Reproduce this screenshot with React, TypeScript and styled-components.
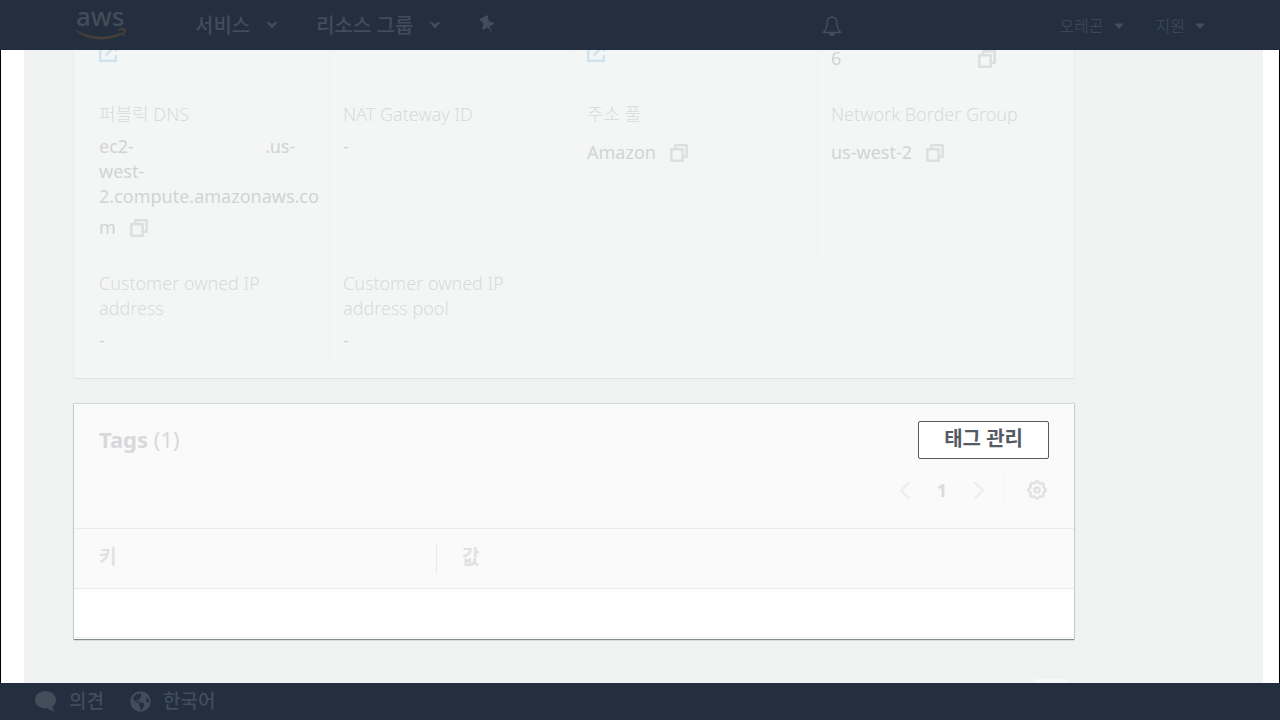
import React from "react";
import styled, { createGlobalStyle, css } from "styled-components";
import { FaGlobeAmericas } from "react-icons/fa";

const GlobalStyle = createGlobalStyle`
  *, *::before, *::after { box-sizing: border-box; }
  body { margin: 0; background: #fff; }
  body, button, table {
    font-family: "Noto Sans", "Noto Sans CJK KR", sans-serif;
    font-size: 18px;
    line-height: 25px;
  }
  button { border: 0; padding: 0; background: none; color: inherit; cursor: pointer; }
  h2, p, dl, dd, dt { margin: 0; font-weight: 400; }
`;

const Page = styled.div`
  height: 100vh;
  display: flex;
  flex-direction: column;
`;

const TopBar = styled.header`
  flex: none;
  height: 50px;
  padding: 0 75px;
  display: flex;
  align-items: center;
  background: #232f3e;
  color: #414d59;
`;

const LogoLink = styled.a`
  display: flex;
  margin-right: 68px;
`;

const NavButton = styled.button<{ $small?: boolean }>`
  display: flex;
  align-items: center;
  white-space: nowrap;
  ${(p) =>
    p.$small
      ? css`
          gap: 10px;
          font-size: 16px;
          font-weight: 300;
          padding-top: 2px;
        `
      : css`
          gap: 16px;
          font-size: 20px;
          font-weight: 500;
        `}
`;

const MainNav = styled.nav`
  display: flex;
  align-items: center;
  gap: 38px;
`;

const SideNav = styled.nav`
  margin-left: auto;
  display: flex;
  align-items: center;
  gap: 32px;
`;

const IconButton = styled.button`
  display: inline-flex;
  align-items: center;
  justify-content: center;
`;

const BellButton = styled(IconButton)`
  margin-right: 185px;
  padding-top: 2px;
`;

const Main = styled.main`
  flex: 1;
  min-height: 0;
  overflow: hidden;
  padding: 0 16px 0 23px;
  border: solid #000;
  border-width: 0 1px;
  display: flex;
`;

const Content = styled.div`
  flex: 1;
  min-width: 0;
  display: flex;
  flex-direction: column;
  justify-content: flex-end;
  padding: 0 189px 0 50px;
  background: #f1f3f3;
`;

const DetailCard = styled.section`
  flex: none;
  padding: 0 12px;
  background: #f4f6f5;
  box-shadow: 0 1px 1px #e2e5e5, 0 0 1px 1px #ebeded;
`;

const DetailGrid = styled.dl`
  display: grid;
  grid-template-columns: repeat(4, minmax(0, 1fr));
  padding-bottom: 12px;
`;

const Detail = styled.div<{ $last?: boolean }>`
  padding: 12px 4px 13px 13px;
  border-right: ${(p) => (p.$last ? "0" : "1px solid #f0f2f2")};
`;

const Label = styled.dt`
  margin-bottom: 7px;
  color: #d8dbdb;
  font-weight: 300;
`;

const Value = styled.dd`
  color: #d1d4d4;
  overflow-wrap: anywhere;
`;

const CopyLine = styled.span`
  display: flex;
  align-items: center;
  height: 37px;
  gap: 14px;
`;

const Hidden = styled.span`
  display: inline-block;
  width: 131px;
`;

const HiddenDigits = styled.span`
  width: 109px;
`;

const OpenLink = styled.a`
  display: flex;
  height: 25px;
  align-items: center;
  color: #cfe2ef;
`;

const TagsCard = styled.section`
  flex: none;
  margin-top: 26px;
  background: #fafafa;
  box-shadow: 0 1px 1px #7f888b, 0 0 1px 1px #d5dada;
`;

const TagsHeader = styled.div`
  display: flex;
  flex-direction: column;
  align-items: flex-end;
  gap: 12px;
  padding: 17px 25px 19px;
`;

const TitleRow = styled.div`
  align-self: stretch;
  display: flex;
  justify-content: space-between;
`;

const Title = styled.h2`
  color: #d7d9da;
  font-size: 22px;
  line-height: 36px;

  b { font-weight: 700; }
  span { font-weight: 400; }
`;

const ManageButton = styled.button`
  height: 38px;
  padding: 0 25px 3px;
  border: 1px solid #545b64;
  border-radius: 2px;
  background: #fff;
  color: #545b64;
  font-size: 20px;
  font-weight: 700;
`;

const Pager = styled.div`
  display: flex;
  align-items: center;
  height: 38px;
  padding-right: 2px;
  color: #eceeee;
`;

const PageNumber = styled.button`
  width: 62px;
  color: #dadcdc;
  font-weight: 700;
`;

const PagerRule = styled.span`
  height: 38px;
  margin: 0 22px 0 19px;
  border-left: 1px solid #f5f6f6;
`;

const TagTable = styled.table`
  width: 100%;
  border-spacing: 0;
  table-layout: fixed;
`;

const HeadCell = styled.th<{ $first?: boolean }>`
  width: ${(p) => (p.$first ? "363px" : "auto")};
  height: 61px;
  padding: 0;
  border: solid #e9ebeb;
  border-width: 1px 0;
  text-align: left;
  color: #e0e2e2;
  font-size: 19px;

  span {
    display: block;
    padding: 0 0 3px 25px;
    line-height: 27px;
    border-right: ${(p) => (p.$first ? "1px solid #e9ebeb" : "0")};
  }
`;

const BodyCell = styled.td`
  height: 49px;
  padding: 0;
  background: #fff;
  border-bottom: 1px solid #eceeee;
`;

const CardEdge = styled.div`
  height: 1px;
  background: #fff;
`;

const BelowCard = styled.div`
  flex: none;
  height: 44px;
  display: flex;
  align-items: flex-end;
  justify-content: flex-end;
  padding-right: 8px;
`;

const NextPanelTab = styled.div`
  width: 32px;
  height: 4px;
  background: #f6f7f7;
`;

const BottomBar = styled.footer`
  flex: none;
  height: 37px;
  padding: 0 35px 1px;
  display: flex;
  align-items: center;
  gap: 26px;
  background: #232f3e;
  color: #414d59;
`;

const FooterButton = styled.button`
  display: flex;
  align-items: center;
  gap: 12px;
  font-size: 19px;
  font-weight: 500;
`;

const Logo = () => (
  <svg width="52" height="40" viewBox="0 0 52 40" overflow="visible" role="img" aria-label="aws">
    <text x="1" y="21" fontFamily="Noto Sans, sans-serif" fontSize="26" fontWeight="500" fill="#414d59">
      aws
    </text>
    <path d="M.5 24.500C15 33 32 34 46.500 27.500c1.600-.7 2.700.6 1.400 1.500C34 37 13 36.500 .3 25.200c-.5-.5-.2-1 .2-.7z" fill="#463f3a" />
    <path d="M42.500 24.600c2.600-1.700 7.500-1.600 8.200-.7.700 1-.4 5.500-2.800 7.900-.4.4-.8.200-.6-.3.700-1.700 1.800-5.100 1.300-5.800s-4-.4-5.700-.3c-.6.100-.8-.4-.4-.8z" fill="#463f3a" />
  </svg>
);

const Chevron = () => (
  <svg width="12" height="8" viewBox="0 0 12 8" aria-hidden="true">
    <path d="M.3 1.200c2-.8 3.700.3 5.700 2 2-1.700 3.700-2.800 5.700-2L6 7.500z" fill="currentColor" />
  </svg>
);

const Caret = () => (
  <svg width="10" height="6" viewBox="0 0 10 6" aria-hidden="true">
    <path d="M0 .5h10L5 6z" fill="currentColor" />
  </svg>
);

const Bell = () => (
  <svg width="20" height="22" viewBox="0 0 20 22" fill="none" stroke="currentColor" strokeWidth="1.400" aria-hidden="true">
    <path d="M10 .5v2M10 2.300c-3.300 0-5 2.400-5 5.500 0 5.200-1 7-3.800 9.700h17.600C16 14.800 15 13 15 7.800c0-3.100-1.700-5.500-5-5.500z" strokeLinejoin="round" />
    <path d="M7 18h6c-.3 2-1.400 3-3 3s-2.700-1-3-3z" fill="currentColor" stroke="none" />
  </svg>
);

const Pin = () => (
  <svg width="18" height="18" viewBox="0 0 18 18" overflow="visible" fill="currentColor" aria-hidden="true">
    <path
      transform="rotate(-28 9 9)"
      d="M4.600 0h8c.9 0 .9 2 0 2.100h-.5v4.800c2.200.9 3 2.300 3 4.100H9.600L8.700 18.500 7.700 11H2.100c0-1.800.8-3.200 3-4.100V2.100h-.5c-.9-.1-.9-2.100 0-2.100z"
    />
  </svg>
);

const Bubble = () => (
  <svg width="22" height="21" viewBox="0 0 22 21" fill="currentColor" aria-hidden="true">
    <path d="M10.500 0C16.500 0 21 3.800 21 8.700c0 2.700-1.400 5-3.600 6.700.2 1.900 1 3.300 2.600 4.900-3-.1-5.400-1.300-7.200-3.100-.7.100-1.500.2-2.300.2C4.600 17.400 0 13.600 0 8.700S4.600 0 10.500 0z" />
  </svg>
);

const CopyIcon = () => (
  <svg width="18" height="18" viewBox="0 0 18 18" fill="none" stroke="#dde0e0" strokeWidth="2.600" strokeLinejoin="round" aria-hidden="true">
    <path d="M1.300 5.300h11.400v11.400H1.300z" />
    <path d="M5.300 4.500V1.300h11.400v11.400H13.500" />
  </svg>
);

const OpenIcon = () => (
  <svg width="18" height="18" viewBox="0 0 18 18" fill="none" stroke="currentColor" strokeWidth="2.400" strokeLinejoin="round" aria-hidden="true">
    <path d="M7 1.200H1.200v15.600h15.600V11M10.500 1.200h6.300v6.300M16.800 1.200L6.500 11.500" />
  </svg>
);

const Angle = ({ right }: { right?: boolean }) => (
  <svg width="12" height="19" viewBox="0 0 12 19" fill="none" stroke="currentColor" strokeWidth="2.400" aria-hidden="true">
    <path d={right ? "M1.500 1l8.500 8.500L1.500 18" : "M10.500 1L2 9.500l8.500 8.500"} />
  </svg>
);

const gearOutline =
  Array.from({ length: 96 }, (_, i) => {
    const angle = (i / 96) * Math.PI * 2;
    const radius = 7.9 + 0.8 * Math.cos(8 * angle);
    return `${i ? "L" : "M"}${(10 + radius * Math.cos(angle)).toFixed(2)} ${(10 + radius * Math.sin(angle)).toFixed(2)}`;
  }).join("") + "Z";

const Gear = () => (
  <svg width="20" height="20" viewBox="0 0 20 20" fill="none" stroke="#e1e3e3" strokeWidth="2.600" aria-hidden="true">
    <path d={gearOutline} />
    <circle cx="10" cy="10" r="2.500" />
  </svg>
);

const CopyButton = () => (
  <IconButton aria-label="복사">
    <CopyIcon />
  </IconButton>
);

export default function App() {
  return (
    <Page>
      <GlobalStyle />
      <TopBar>
        <LogoLink href="#"><Logo /></LogoLink>
        <MainNav>
          <NavButton>서비스 <Chevron /></NavButton>
          <NavButton>리소스 그룹 <Chevron /></NavButton>
          <IconButton aria-label="고정"><Pin /></IconButton>
        </MainNav>
        <SideNav>
          <BellButton aria-label="알림"><Bell /></BellButton>
          <NavButton $small>오레곤 <Caret /></NavButton>
          <NavButton $small>지원 <Caret /></NavButton>
        </SideNav>
      </TopBar>

      <Main>
        <Content>
          <DetailCard>
            <DetailGrid>
              <Detail><Value><OpenLink href="#" aria-label="열기"><OpenIcon /></OpenLink></Value></Detail>
              <Detail />
              <Detail><Value><OpenLink href="#" aria-label="열기"><OpenIcon /></OpenLink></Value></Detail>
              <Detail $last>
                <Value><CopyLine>6<HiddenDigits /><CopyButton /></CopyLine></Value>
              </Detail>

              <Detail>
                <Label>퍼블릭 DNS</Label>
                <Value>
                  ec2-<Hidden />.us-<br />west-<br />2.compute.amazonaws.co
                  <CopyLine>m <CopyButton /></CopyLine>
                </Value>
              </Detail>
              <Detail>
                <Label>NAT Gateway ID</Label>
                <Value>-</Value>
              </Detail>
              <Detail>
                <Label>주소 풀</Label>
                <Value><CopyLine>Amazon <CopyButton /></CopyLine></Value>
              </Detail>
              <Detail $last>
                <Label>Network Border Group</Label>
                <Value><CopyLine>us-west-2 <CopyButton /></CopyLine></Value>
              </Detail>

              <Detail>
                <Label>Customer owned IP address</Label>
                <Value>-</Value>
              </Detail>
              <Detail>
                <Label>Customer owned IP address pool</Label>
                <Value>-</Value>
              </Detail>
            </DetailGrid>
          </DetailCard>

          <TagsCard>
            <TagsHeader>
              <TitleRow>
                <Title><b>Tags</b> <span>(1)</span></Title>
                <ManageButton>태그 관리</ManageButton>
              </TitleRow>
              <Pager>
                <IconButton aria-label="이전"><Angle /></IconButton>
                <PageNumber>1</PageNumber>
                <IconButton aria-label="다음"><Angle right /></IconButton>
                <PagerRule />
                <IconButton aria-label="설정"><Gear /></IconButton>
              </Pager>
            </TagsHeader>
            <TagTable>
              <thead>
                <tr>
                  <HeadCell $first><span>키</span></HeadCell>
                  <HeadCell><span>값</span></HeadCell>
                </tr>
              </thead>
              <tbody>
                <tr>
                  <BodyCell />
                  <BodyCell />
                </tr>
              </tbody>
            </TagTable>
            <CardEdge />
          </TagsCard>
          <BelowCard><NextPanelTab /></BelowCard>
        </Content>
      </Main>

      <BottomBar>
        <FooterButton><Bubble /> 의견</FooterButton>
        <FooterButton><FaGlobeAmericas size={21} /> 한국어</FooterButton>
      </BottomBar>
    </Page>
  );
}
